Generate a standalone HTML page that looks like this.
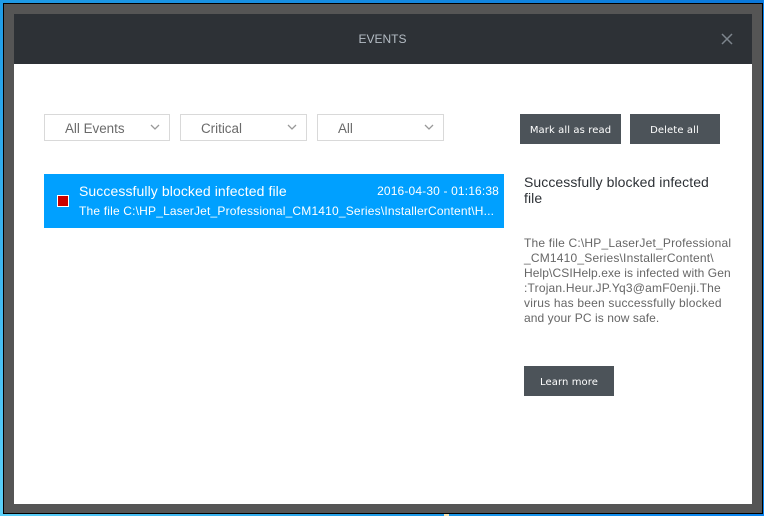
<!DOCTYPE html>
<html>
<head>
<meta charset="utf-8">
<style>
html,body{margin:0;padding:0;width:765px;height:517px;overflow:hidden;background:#fff}
body{position:relative;font-family:"Liberation Sans",sans-serif}
div,span{position:absolute;white-space:nowrap;box-sizing:border-box}
.sel{top:114px;height:27px;background:#fff;border:1px solid #d9d9d9;color:#6a6a6a;font-size:13.4px;line-height:27px}
.btn{background:#4c5359;color:#fff;text-align:center;font-family:"DejaVu Sans",sans-serif;font-size:10px;letter-spacing:.1px;line-height:30px;height:30px;padding-top:2px}
.l{font-size:12px;letter-spacing:.2px;color:#666;left:524px;line-height:15px;height:15px}
</style>
</head>
<body>
<div style="left:0;top:0;width:764px;height:3px;background:linear-gradient(90deg,#1f9be6,#0a78dc)"></div>
<div style="left:0;top:0;width:3px;height:516px;background:linear-gradient(180deg,#1f9be6,#5cd0f8)"></div>
<div style="left:763px;top:0;width:1px;height:516px;background:#0a84f0"></div>
<div style="left:0;top:514px;width:764px;height:2px;background:linear-gradient(90deg,#5cd0f8,#1f9be6 50%,#0a84f0)"></div>
<div style="left:444px;top:514px;width:5px;height:2px;background:#f5e6b8"></div>
<div style="left:3px;top:3px;width:760px;height:511px;background:#555;border:1px solid #000"></div>
<div style="left:14px;top:14px;width:738px;height:50px;background:#2d3136"></div>
<div style="left:14px;top:64px;width:738px;height:440px;background:#fff"></div>

<div style="left:14px;top:31px;width:737px;text-align:center;color:#b4bcc4;font-size:12px;line-height:16px">EVENTS</div>
<svg style="position:absolute;left:720px;top:32px" width="14" height="14" viewBox="0 0 14 14"><path d="M2 2L12 12M12 2L2 12" stroke="#7d858d" stroke-width="1.5" fill="none"/></svg>

<div class="sel" style="left:44px;width:126px"><span style="left:20px;top:0">All Events</span><svg style="position:absolute;left:105px;top:9px" width="10" height="7" viewBox="0 0 10 7"><path d="M1 1L5 5L9 1" stroke="#999" stroke-width="1.3" fill="none"/></svg></div>
<div class="sel" style="left:180px;width:127px"><span style="left:20px;top:0">Critical</span><svg style="position:absolute;left:106px;top:9px" width="10" height="7" viewBox="0 0 10 7"><path d="M1 1L5 5L9 1" stroke="#999" stroke-width="1.3" fill="none"/></svg></div>
<div class="sel" style="left:317px;width:127px"><span style="left:20px;top:0">All</span><svg style="position:absolute;left:106px;top:9px" width="10" height="7" viewBox="0 0 10 7"><path d="M1 1L5 5L9 1" stroke="#999" stroke-width="1.3" fill="none"/></svg></div>

<div class="btn" style="left:520px;top:114px;width:101px">Mark all as read</div>
<div class="btn" style="left:630px;top:114px;width:89px">Delete all</div>
<div style="left:719px;top:114px;width:1px;height:30px;background:#4c5359"></div>

<div style="left:44px;top:174px;width:460px;height:54px;background:#00a0ff"></div>
<div style="left:57px;top:195px;width:12px;height:12px;background:#cc0000;border:1px solid #fff"></div>
<div style="left:79px;top:183px;color:#fff;font-size:14px;letter-spacing:.09px;line-height:16px">Successfully blocked infected file</div>
<div style="right:266px;top:183px;color:#fff;font-size:12px;letter-spacing:.15px;line-height:16px">2016-04-30 - 01:16:38</div>
<div style="left:79px;top:203px;color:#fff;font-size:12px;letter-spacing:.18px;line-height:16px">The file C:\HP_LaserJet_Professional_CM1410_Series\InstallerContent\H...</div>

<div style="left:524px;top:174px;color:#2d3136;font-size:14px;letter-spacing:.07px;line-height:16px">Successfully blocked infected</div>
<div style="left:524px;top:190px;color:#2d3136;font-size:14px;letter-spacing:.07px;line-height:16px">file</div>

<div class="l" style="top:236px">The file C:\HP_LaserJet_Professional</div>
<div class="l" style="top:251px">_CM1410_Series\InstallerContent\</div>
<div class="l" style="top:266px;letter-spacing:.09px">Help\CSIHelp.exe is infected with Gen</div>
<div class="l" style="top:281px">:Trojan.Heur.JP.Yq3@amF0enji.The</div>
<div class="l" style="top:296px">virus has been successfully blocked</div>
<div class="l" style="top:311px;letter-spacing:.08px">and your PC is now safe.</div>

<div class="btn" style="left:524px;top:366px;width:90px">Learn more</div>
</body>
</html>
